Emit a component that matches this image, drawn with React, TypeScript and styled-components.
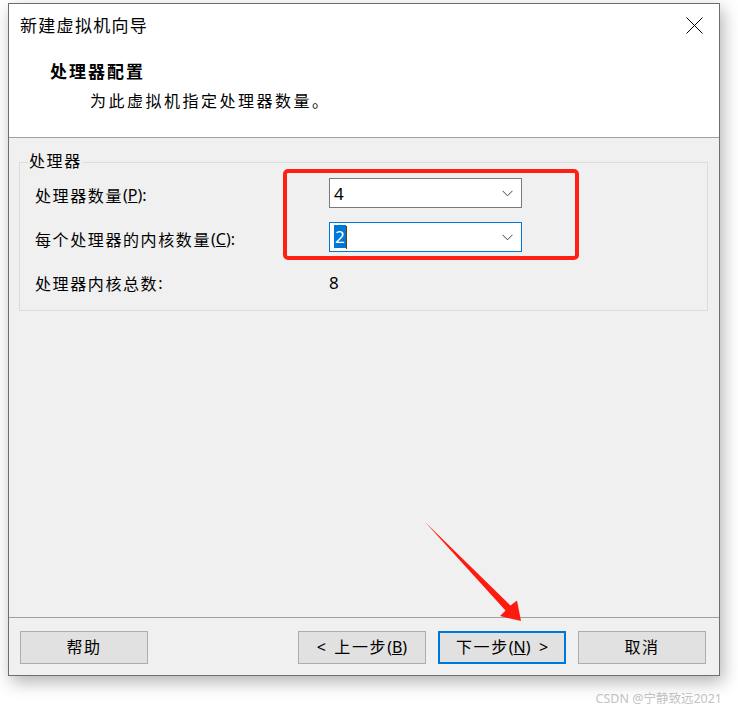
import React from "react";
import styled, { createGlobalStyle } from "styled-components";

const Global = createGlobalStyle`
  html, body { margin: 0; padding: 0; background: #ffffff; }
  body { font-family: "Noto Sans CJK SC", "Noto Sans", sans-serif; color: #000; }
  * { box-sizing: border-box; }
`;

const Page = styled.div`
  position: relative;
  width: 738px;
  height: 708px;
  padding: 3px 0 0 8px;
  overflow: hidden;
`;

const Window = styled.div`
  position: relative;
  width: 712px;
  height: 673px;
  border: 1px solid #6e6e6e;
  background: #f0f0f0;
  box-shadow: 3px 6px 16px rgba(0, 0, 0, 0.3);
  display: flex;
  flex-direction: column;
`;

const Header = styled.div`
  height: 134px;
  background: #ffffff;
  border-bottom: 1px solid #a0a0a0;
  display: flex;
  flex-direction: column;
`;

const TitleRow = styled.div`
  height: 42px;
  display: flex;
  align-items: center;
  justify-content: space-between;
  padding: 0 16px 0 11px;
`;

const Title = styled.div`
  font-size: 17px;
  letter-spacing: 1.3px;
  line-height: 22px;
`;

const Close = styled.svg`
  width: 17px;
  height: 17px;
  margin-top: 1px;
`;

const Heading = styled.div`
  margin: 14px 0 0 41px;
  font-size: 17px;
  font-weight: 700;
  letter-spacing: 2px;
  line-height: 22px;
`;

const SubText = styled.div`
  margin: 7px 0 0 81px;
  font-size: 16px;
  letter-spacing: 2.5px;
  line-height: 22px;
`;

const Body = styled.div`
  position: relative;
  flex: 1;
  padding: 24px 11px 0 10px;
`;

const Group = styled.div`
  position: relative;
  border: 1px solid #dcdcdc;
  padding: 15px 0 14px 15px;
  display: grid;
  grid-template-columns: 294px 193px;
  grid-auto-rows: 30px;
  row-gap: 14px;
`;

const Legend = styled.span`
  position: absolute;
  left: 8px;
  top: -14px;
  padding: 0 1px;
  background: #f0f0f0;
  font-size: 16px;
  letter-spacing: 1.6px;
  line-height: 22px;
`;

const Label = styled.div`
  display: flex;
  align-items: center;
  padding-top: 4px;
  font-size: 16px;
  letter-spacing: 1.6px;
  white-space: nowrap;
`;

const Latin = styled.span`
  font-family: "Noto Sans", "Liberation Sans", sans-serif;
  font-size: 16px;
  letter-spacing: 0px;
`;

const Value = styled.div`
  display: flex;
  align-items: center;
  padding-top: 2px;
  font-family: "Noto Sans", "Liberation Sans", sans-serif;
  font-size: 17px;
`;

const Combo = styled.div<{ $focused?: boolean }>`
  display: flex;
  align-items: center;
  justify-content: space-between;
  background: #ffffff;
  border: 1px solid ${(p) => (p.$focused ? "#0078d7" : "#7a7a7a")};
  padding: 0 8px 0 4px;
  font-family: "Noto Sans", "Liberation Sans", sans-serif;
  font-size: 17px;
`;

const Selected = styled.span`
  display: inline-flex;
  align-items: center;
  height: 23px;
  padding: 0 1px;
  background: #0078d7;
  color: #ffffff;
`;

const Caret = styled.span`
  display: inline-block;
  width: 1px;
  height: 23px;
  background: #6b3a00;
  vertical-align: middle;
`;

const Chevron = styled.svg`
  width: 11px;
  height: 7px;
`;

const Highlight = styled.div`
  position: absolute;
  left: 274px;
  top: 31px;
  width: 296px;
  height: 91px;
  border: 4px solid #ff2014;
  border-radius: 5px;
`;

const Footer = styled.div`
  height: 58px;
  border-top: 1px solid #a0a0a0;
  display: flex;
  align-items: flex-start;
  padding: 13px 13px 0 11px;
  gap: 12px;
`;

const Spacer = styled.div`
  flex: 1;
`;

const Button = styled.div<{ $focused?: boolean }>`
  width: 128px;
  height: 33px;
  display: flex;
  align-items: center;
  justify-content: center;
  padding-bottom: 4px;
  background: #e1e1e1;
  border: ${(p) => (p.$focused ? "2px solid #0078d7" : "1px solid #adadad")};
  font-size: 16px;
  letter-spacing: 1.6px;
  white-space: pre;
`;

const Watermark = styled.div`
  margin-top: 12px;
  padding-right: 16px;
  text-align: right;
  font-size: 12.5px;
  color: #c4c4c4;
  font-family: "Noto Sans", "Noto Sans CJK SC", sans-serif;
`;

const Arrow = styled.svg`
  position: absolute;
  left: 0;
  top: 0;
  width: 738px;
  height: 708px;
  pointer-events: none;
`;

const ChevronIcon = () => (
  <Chevron viewBox="0 0 11 7">
    <path d="M0.5 0.8 L5.5 5.8 L10.5 0.8" fill="none" stroke="#404040" strokeWidth="1" />
  </Chevron>
);

export default function App() {
  return (
    <>
      <Global />
      <Page>
        <Window>
          <Header>
            <TitleRow>
              <Title>新建虚拟机向导</Title>
              <Close viewBox="0 0 17 17">
                <path d="M0.5 0.5 L16.5 16.5 M16.5 0.5 L0.5 16.5" stroke="#000" strokeWidth="1" />
              </Close>
            </TitleRow>
            <Heading>处理器配置</Heading>
            <SubText>为此虚拟机指定处理器数量。</SubText>
          </Header>
          <Body>
            <Group>
              <Legend>处理器</Legend>
              <Label>
                处理器数量<Latin>(<u>P</u>):</Latin>
              </Label>
              <Combo>
                <span>4</span>
                <ChevronIcon />
              </Combo>
              <Label>
                每个处理器的内核数量<Latin>(<u>C</u>):</Latin>
              </Label>
              <Combo $focused>
                <span>
                  <Selected>2</Selected>
                  <Caret />
                </span>
                <ChevronIcon />
              </Combo>
              <Label>
                处理器内核总数<Latin>:</Latin>
              </Label>
              <Value>8</Value>
            </Group>
            <Highlight />
          </Body>
          <Footer>
            <Button>帮助</Button>
            <Spacer />
            <Button>
              <span>
                <Latin>{"<  "}</Latin>上一步<Latin>(<u>B</u>)</Latin>
              </span>
            </Button>
            <Button $focused>
              <span>
                下一步<Latin>(<u>N</u>){"  >"}</Latin>
              </span>
            </Button>
            <Button>取消</Button>
          </Footer>
        </Window>
        <Watermark>CSDN @宁静致远2021</Watermark>
        <Arrow viewBox="0 0 738 708">
          <polygon
            points="425,522 510.5,605.5 517,600.5 521,621 500,616 505.5,610.5"
            fill="#ff1a10"
          />
        </Arrow>
      </Page>
    </>
  );
}
